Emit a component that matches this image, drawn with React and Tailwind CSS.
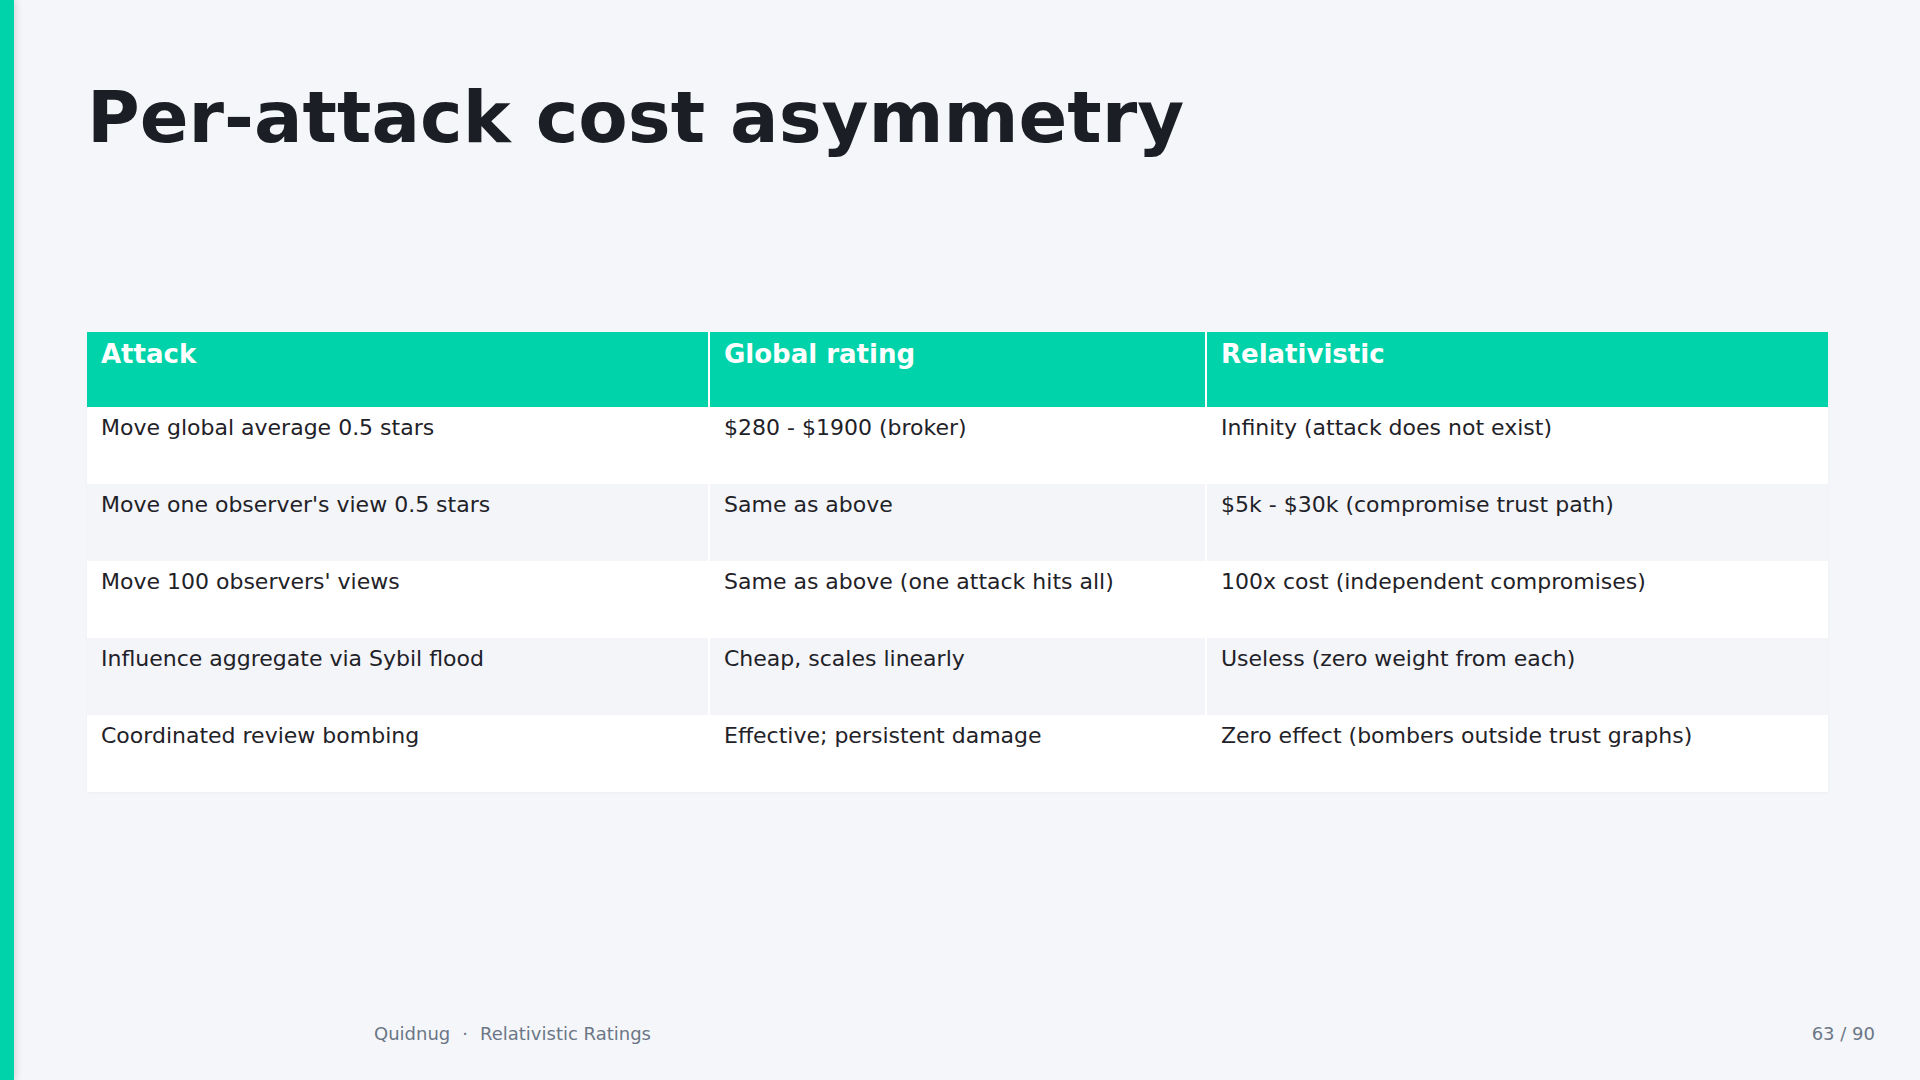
const rows = [
  ["Move global average 0.5 stars", "$280 - $1900 (broker)", "Infinity (attack does not exist)"],
  ["Move one observer's view 0.5 stars", "Same as above", "$5k - $30k (compromise trust path)"],
  ["Move 100 observers' views", "Same as above (one attack hits all)", "100x cost (independent compromises)"],
  ["Influence aggregate via Sybil flood", "Cheap, scales linearly", "Useless (zero weight from each)"],
  ["Coordinated review bombing", "Effective; persistent damage", "Zero effect (bombers outside trust graphs)"],
]

const App = () => {
  return (
    <div className="flex h-screen w-full overflow-hidden bg-[#f5f6fa] font-['DejaVu_Sans',sans-serif] text-[#1f2228]">
      {/* accent bar */}
      <div className="relative z-10 h-full w-[14px] shrink-0 bg-[#00d3aa] shadow-[2px_0_7px_rgba(0,0,0,0.13)]" />

      <div className="flex flex-1 flex-col">
        <div className="pl-[73px] pr-[92px]">
          <h1 className="pt-[74px] text-[72px] font-bold leading-[1.2] text-[#1b1e24]">Per-attack cost asymmetry</h1>

          <table className="mt-[172px] w-full table-fixed border-collapse shadow-[0_1px_3px_rgba(0,0,0,0.04)]">
            <colgroup>
              <col className="w-[622px]" />
              <col className="w-[497px]" />
              <col />
            </colgroup>
            <thead>
              <tr className="h-[75px] bg-[#00d3aa] text-white">
                <th className="px-[14px] pt-[3px] text-left align-top text-[26px] font-bold leading-normal">Attack</th>
                <th className="border-l-2 border-white px-[14px] pt-[3px] text-left align-top text-[26px] font-bold leading-normal">
                  Global rating
                </th>
                <th className="border-l-2 border-white px-[14px] pt-[3px] text-left align-top text-[26px] font-bold leading-normal">
                  Relativistic
                </th>
              </tr>
            </thead>
            <tbody>
              {rows.map((r, i) => (
                <tr key={i} className={i % 2 === 0 ? "h-[77px] bg-white" : "h-[77px] bg-[#f3f5f9]"}>
                  <td className="px-[14px] pt-[4px] align-top text-[22px] leading-normal">{r[0]}</td>
                  <td className="border-l-2 border-white px-[14px] pt-[4px] align-top text-[22px] leading-normal">{r[1]}</td>
                  <td className="border-l-2 border-white px-[14px] pt-[4px] align-top text-[22px] leading-normal">{r[2]}</td>
                </tr>
              ))}
            </tbody>
          </table>
        </div>

        <div className="mt-auto flex items-center justify-between pb-[33px] pl-[360px] pr-[45px] text-[18px] leading-normal text-[#6b7686]">
          <div>
            Quidnug<span className="px-[12px]">·</span>Relativistic Ratings
          </div>
          <div>63 / 90</div>
        </div>
      </div>
    </div>
  )
}

export default App
